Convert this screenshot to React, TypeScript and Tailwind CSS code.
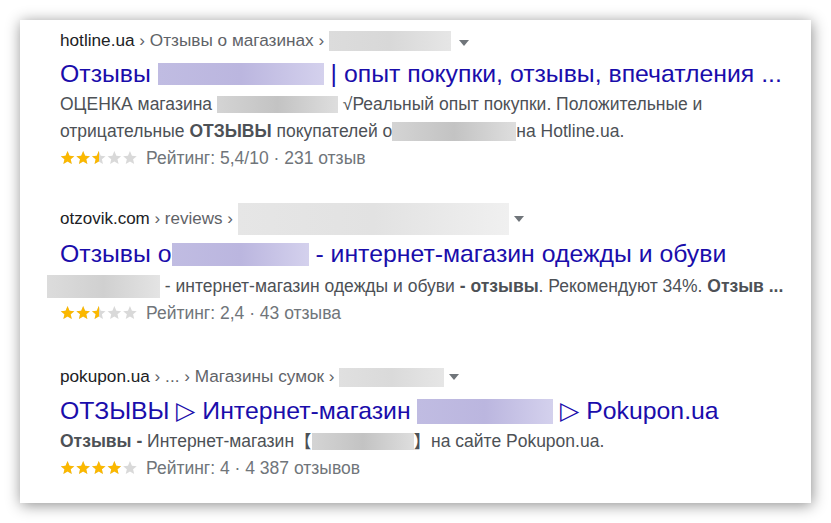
import React from "react";

const STAR = "M12 2l2.9 6.9 7.1.6-5.4 4.7 1.6 7L12 17.3 5.8 21.2l1.6-7L2 9.5l7.1-.6z";

function Stars({ value, id }: { value: number; id: string }) {
  return (
    <svg width="78" height="15" viewBox="0 0 78 15" className="shrink-0">
      <defs>
        <clipPath id={id}>
          <rect x="0" y="0" width={value * 15.6} height="15" />
        </clipPath>
      </defs>
      {[0, 1, 2, 3, 4].map((i) => (
        <path key={"g" + i} d={STAR} fill="#d9d9d9" transform={`translate(${i * 15.6 - 0.6} -1.3) scale(0.68)`} />
      ))}
      <g clipPath={`url(#${id})`}>
        {[0, 1, 2, 3, 4].map((i) => (
          <path key={"y" + i} d={STAR} fill="#fbb800" transform={`translate(${i * 15.6 - 0.6} -1.3) scale(0.68)`} />
        ))}
      </g>
    </svg>
  );
}

function Arrow() {
  return <span className="ml-[5px] inline-block w-0 h-0 border-l-[5px] border-r-[5px] border-t-[6px] border-l-transparent border-r-transparent border-t-[#70757a]" />;
}

function GrayBox({ cls }: { cls: string }) {
  return <span className={"inline-block align-middle bg-linear-to-r from-[#d4d4d4] via-[#c3c3c3] to-[#dedede] " + cls} />;
}
function PurpleBox({ cls }: { cls: string }) {
  return <span className={"inline-block align-middle bg-linear-to-r from-[#c0bce2] via-[#bbb6df] to-[#d4d1ed] " + cls} />;
}

export default function App() {
  return (
    <div className="w-[831px] h-[523px] bg-white p-[20px]" style={{ fontFamily: '"Liberation Sans", Arial, sans-serif' }}>
      <div className="w-[791px] h-[483px] bg-white shadow-[1px_2px_14px_rgba(0,0,0,0.45)] pl-[40px] pt-[10px] flex flex-col">
        {/* Result 1 */}
        <div className="flex items-center h-[22px] text-[17.2px] text-[#5f6368] whitespace-nowrap">
          <span className="text-[#202124]">hotline.ua</span>
          <span>&nbsp;› Отзывы о магазинах ›&nbsp;</span>
          <span className="inline-block w-[122px] h-[20px] bg-linear-to-r from-[#dcdcdc] via-[#d8d8d8] to-[#e6e6e6]" />
          <span className="ml-[3px]"><Arrow /></span>
        </div>
        <div className="mt-[6px] h-[32px] flex items-center text-[24.8px] text-[#1a0dab] whitespace-nowrap">
          <span>Отзывы&nbsp;</span>
          <PurpleBox cls="w-[166px] h-[22px]" />
          <span>&nbsp;| опыт покупки, отзывы, впечатления ...</span>
        </div>
        <div className="mt-[1px] text-[17.5px] leading-[27px] text-[#4d5156]">
          <div className="flex items-center whitespace-nowrap">
            <span>ОЦЕНКА магазина&nbsp;</span>
            <GrayBox cls="w-[121px] h-[17px]" />
            <span>&nbsp;√Реальный опыт покупки. Положительные и</span>
          </div>
          <div className="flex items-center whitespace-nowrap">
            <span>отрицательные <b className="text-[#4d5156]">ОТЗЫВЫ</b> покупателей о</span>
            <GrayBox cls="w-[124px] h-[19px]" />
            <span>на Hotline.ua.</span>
          </div>
        </div>
        <div className="flex items-center gap-[8px] h-[27px] text-[17.5px] text-[#70757a] whitespace-nowrap">
          <Stars value={2.5} id="s1" />
          <span>Рейтинг: 5,4/10 · 231 отзыв</span>
        </div>

        {/* Result 2 */}
        <div className="mt-[31px] flex items-center h-[32px] text-[17px] text-[#5f6368] whitespace-nowrap">
          <span className="text-[#202124]">otzovik.com</span>
          <span>&nbsp;› reviews ›&nbsp;</span>
          <span className="inline-block w-[271px] h-[32px] bg-linear-to-r from-[#e6e6e6] via-[#e2e2e2] to-[#f0f0f0]" />
          <Arrow />
        </div>
        <div className="mt-[3px] h-[32px] flex items-center text-[24.8px] text-[#1a0dab] whitespace-nowrap">
          <span>Отзывы о</span>
          <PurpleBox cls="w-[137px] h-[23px]" />
          <span>&nbsp;- интернет-магазин одежды и обуви</span>
        </div>
        <div className="mt-[3px] -ml-[13px] flex items-center h-[27px] text-[17.5px] text-[#4d5156] whitespace-nowrap">
          <span className="inline-block w-[113px] h-[23px] bg-linear-to-r from-[#dcdcdc] via-[#d0d0d0] to-[#e4e4e4]" />
          <span>&nbsp;- интернет-магазин одежды и обуви <b>- отзывы</b>. Рекомендуют 34%. <b>Отзыв ...</b></span>
        </div>
        <div className="flex items-center gap-[8px] h-[27px] text-[17.5px] text-[#70757a] whitespace-nowrap">
          <Stars value={2.5} id="s2" />
          <span>Рейтинг: 2,4 · 43 отзыва</span>
        </div>

        {/* Result 3 */}
        <div className="mt-[39px] flex items-center h-[22px] text-[17.2px] text-[#5f6368] whitespace-nowrap">
          <span className="text-[#202124]">pokupon.ua</span>
          <span>&nbsp;› ... › Магазины сумок ›&nbsp;</span>
          <span className="inline-block w-[105px] h-[19px] bg-linear-to-r from-[#e0e0e0] via-[#dadada] to-[#e6e6e6]" />
          <Arrow />
        </div>
        <div className="mt-[7px] h-[32px] flex items-center text-[24.8px] text-[#1a0dab] whitespace-nowrap">
          <span>ОТЗЫВЫ ▷ Интернет-магазин&nbsp;</span>
          <PurpleBox cls="w-[136px] h-[25px]" />
          <span>&nbsp;▷ Pokupon.ua</span>
        </div>
        <div className="mt-[1px] flex items-center h-[27px] text-[17.5px] text-[#4d5156] whitespace-nowrap">
          <span><b>Отзывы -</b> Интернет-магазин </span>
          <span style={{ fontFamily: '"Noto Sans CJK SC", sans-serif' }}>【</span>
          <GrayBox cls="w-[102px] h-[17px]" />
          <span style={{ fontFamily: '"Noto Sans CJK SC", sans-serif' }}>】</span>
          <span>на сайте Pokupon.ua.</span>
        </div>
        <div className="flex items-center gap-[8px] h-[27px] text-[17.5px] text-[#70757a] whitespace-nowrap">
          <Stars value={4} id="s3" />
          <span>Рейтинг: 4 · 4 387 отзывов</span>
        </div>
      </div>
    </div>
  );
}
